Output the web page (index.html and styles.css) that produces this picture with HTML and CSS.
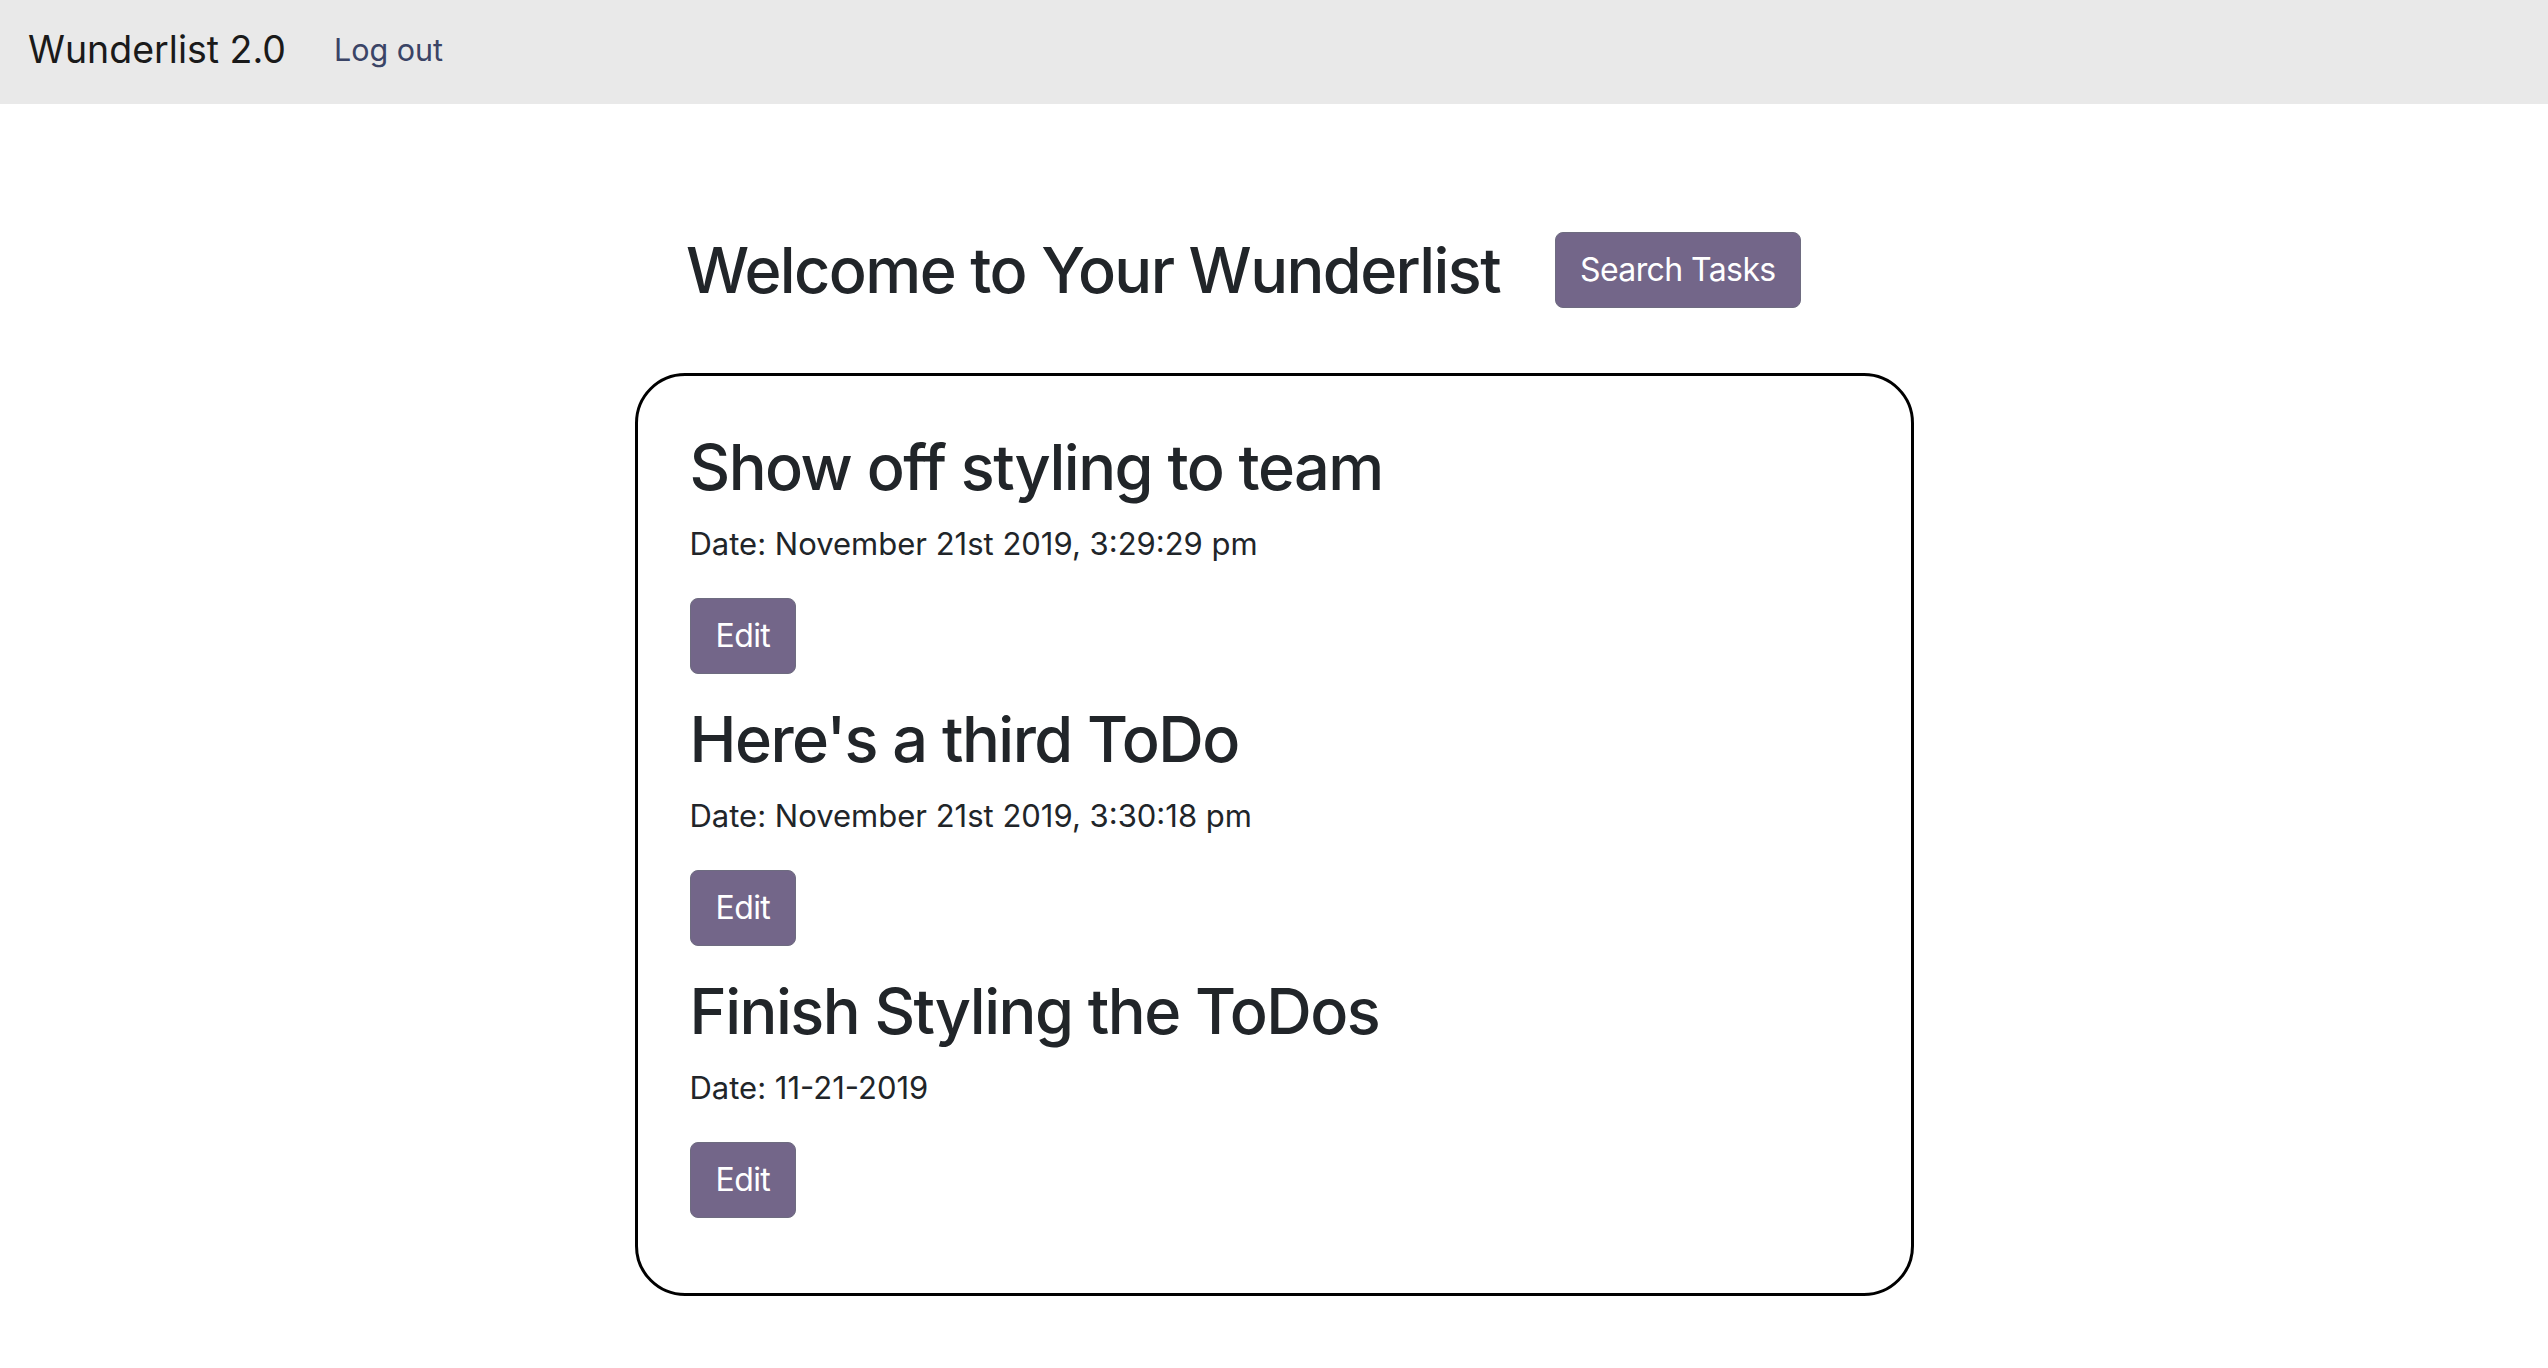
FILE: index.html
```html
<!DOCTYPE html>
<html lang="en">
<head>
<meta charset="utf-8">
<title>Wunderlist 2.0</title>
<link rel="stylesheet" href="styles.css">
</head>
<body>
<nav class="navbar">
  <span class="brand">Wunderlist 2.0</span>
  <a class="nav-link" href="#">Log out</a>
</nav>
<main class="page">
  <div class="welcome-row">
    <h1 class="welcome">Welcome to Your Wunderlist</h1>
    <button class="btn btn-search">Search Tasks</button>
  </div>
  <section class="card">
    <div class="todo">
      <h2 class="todo-title">Show off styling to team</h2>
      <p class="todo-date">Date: November 21st 2019, 3:29:29 pm</p>
      <button class="btn">Edit</button>
    </div>
    <div class="todo">
      <h2 class="todo-title">Here's a third ToDo</h2>
      <p class="todo-date">Date: November 21st 2019, 3:30:18 pm</p>
      <button class="btn">Edit</button>
    </div>
    <div class="todo">
      <h2 class="todo-title">Finish Styling the ToDos</h2>
      <p class="todo-date">Date: 11-21-2019</p>
      <button class="btn">Edit</button>
    </div>
  </section>
</main>
</body>
</html>
```
FILE: styles.css
```css
* { box-sizing: border-box; }
html, body {
  margin: 0;
  padding: 0;
  background: #ffffff;
  font-family: Inter, "Noto Sans", "DejaVu Sans", sans-serif;
  color: #212529;
}
.navbar {
  height: 104px;
  background: #e9e9e9;
  display: flex;
  align-items: center;
  padding: 0 0 6px 28px;
}
.brand {
  font-size: 37.5px;
  color: #1a1a1a;
  margin-right: 48px;
}
.nav-link {
  font-size: 30.5px;
  color: #3a4466;
  text-decoration: none;
}
.page {
  display: flex;
  flex-direction: column;
  align-items: center;
}
.welcome-row {
  margin-top: 127px;
  height: 78px;
  width: 100%;
  display: flex;
  align-items: center;
  padding-left: 686px;
  gap: 55px;
}
.welcome {
  margin: 0;
  font-size: 63px;
  font-weight: 500;
  line-height: 78px;
  letter-spacing: -1.6px;
}
.btn {
  font-family: inherit;
  font-size: 32px;
  line-height: 48px;
  padding: 13px 25px;
  letter-spacing: -0.6px;
  background: #736689;
  color: #ffffff;
  border: 1.5px solid #6e6c80;
  border-radius: 8px;
  cursor: pointer;
}
.btn-search {
  padding: 13px 24px;
}
.card {
  margin-top: 64px;
  width: 1279px;
  border: 3.5px solid #000000;
  border-radius: 50px;
  padding: 52px 52px 75px;
  display: flex;
  flex-direction: column;
  gap: 26px;
}
.todo {
  display: flex;
  flex-direction: column;
  align-items: flex-start;
}
.todo-title {
  margin: 0 0 16px;
  font-size: 63px;
  font-weight: 500;
  line-height: 78px;
  letter-spacing: -1.5px;
}
.todo-date {
  margin: 0 0 32px;
  font-size: 31px;
  line-height: 44px;
}
```
